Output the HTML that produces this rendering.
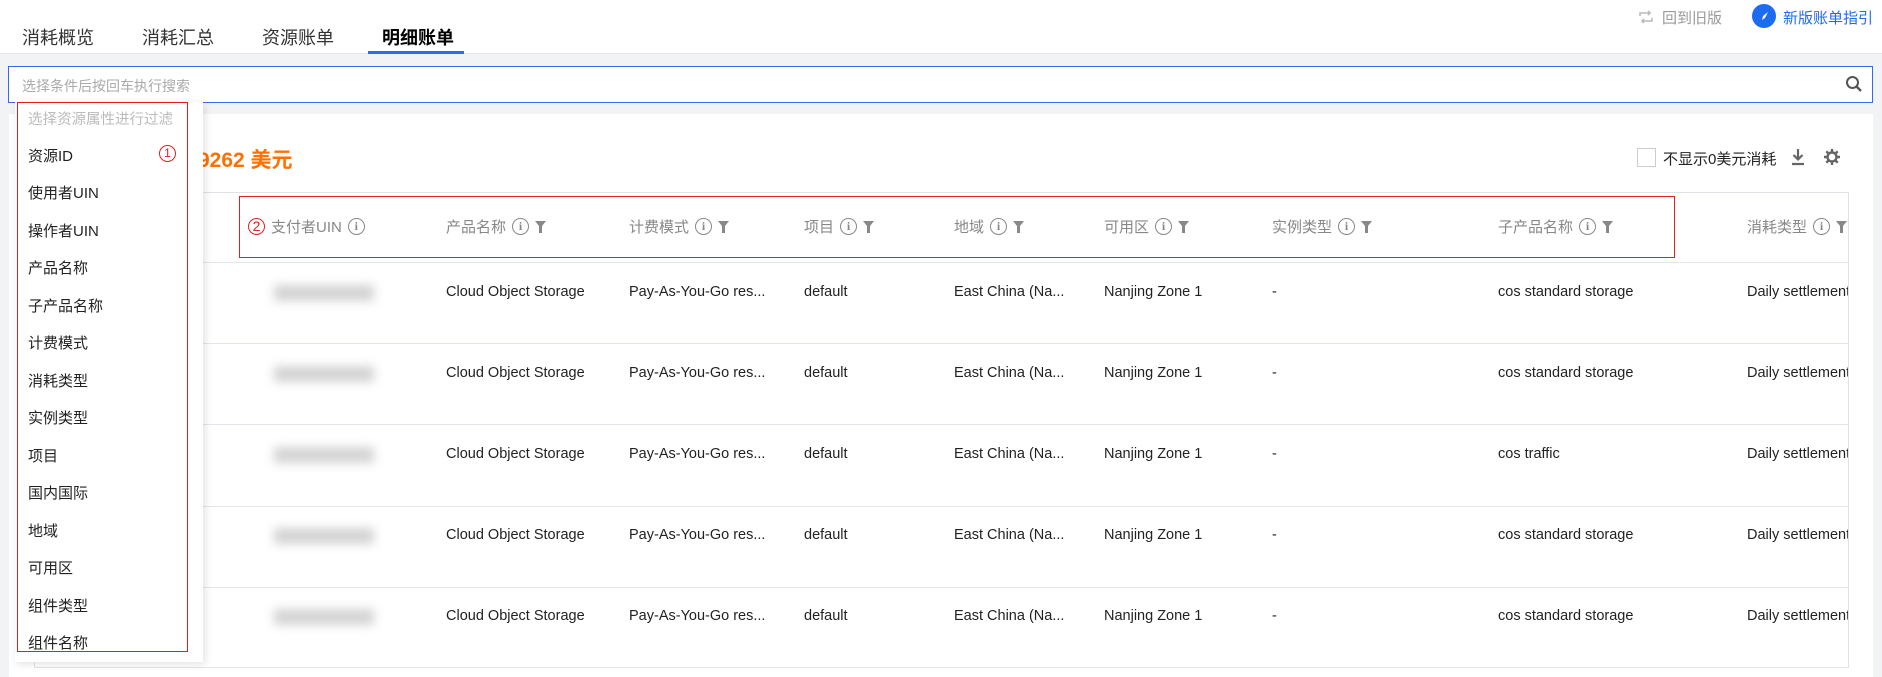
<!DOCTYPE html>
<html><head><meta charset="utf-8"><style>
*{margin:0;padding:0;box-sizing:border-box}
body{width:1882px;height:677px;overflow:hidden;background:#f2f3f5;font-family:"Liberation Sans","Noto Sans CJK SC",sans-serif;position:relative;color:#333}
.a{position:absolute;white-space:nowrap}
.tab{font-size:18px;color:#333;top:24px}
.hd{font-size:15px;color:#888;top:216px;display:flex;align-items:center;gap:6px}
.i{display:inline-block;width:17px;height:17px;border:1.8px solid #888;border-radius:50%;font-size:12px;line-height:14px;text-align:center;font-weight:bold;color:#888;font-family:"Liberation Serif",serif}
.c{font-size:14.5px;color:#222}
.row{position:absolute;left:34px;width:1814px;height:1px;background:#e2e5ea}
.blur{position:absolute;left:274px;width:100px;height:16px;background:#c8c8c8;filter:blur(5px);opacity:.8}
.it{position:absolute;left:28px;font-size:15px;color:#222}
</style></head><body>
<div class="a" style="left:0;top:0;width:1882px;height:54px;background:#fff;border-bottom:1px solid #e6e8ec"></div>
<div class="a tab" style="left:22px">消耗概览</div>
<div class="a tab" style="left:142px">消耗汇总</div>
<div class="a tab" style="left:262px">资源账单</div>
<div class="a tab" style="left:382px;font-weight:bold;color:#000">明细账单</div>
<div class="a" style="left:368px;top:51px;width:96px;height:3px;background:#2f6bf0"></div>
<svg class="a" style="left:1638px;top:9px" width="16" height="16" viewBox="0 0 16 16"><path d="M2 7V4h10M10 2l2 2-2 2M14 9v3H4M6 14l-2-2 2-2" fill="none" stroke="#bbb" stroke-width="1.6"/></svg>
<div class="a" style="left:1662px;top:7px;font-size:15px;color:#999">回到旧版</div>
<div class="a" style="left:1752px;top:4px;width:24px;height:24px;border-radius:50%;background:#1c6cf2"></div>
<svg class="a" style="left:1756px;top:8px" width="16" height="16" viewBox="0 0 16 16"><path d="M12 4L9 10 6 12 7 8z" fill="#fff"/></svg>
<div class="a" style="left:1783px;top:7px;font-size:15px;color:#1c6cf2">新版账单指引</div>
<div class="a" style="left:8px;top:66px;width:1865px;height:37px;background:#fff;border:1.5px solid #2f6bf0"></div>
<div class="a" style="left:22px;top:76px;font-size:14px;color:#aaa">选择条件后按回车执行搜索</div>
<svg class="a" style="left:1845px;top:75px" width="18" height="18" viewBox="0 0 18 18"><circle cx="7.5" cy="7.5" r="5.5" fill="none" stroke="#555" stroke-width="2"/><path d="M11.5 11.5L16 16" stroke="#555" stroke-width="2.4"/></svg>
<div class="a" style="left:9px;top:114px;width:1864px;height:563px;background:#fff"></div>
<div class="a" style="left:198px;top:144px;font-size:21px;font-weight:bold;color:#ff7000">9262 美元</div>
<div class="a" style="left:1637px;top:148px;width:19px;height:19px;border:1px solid #ccc;background:#fff"></div>
<div class="a" style="left:1663px;top:148px;font-size:15px;color:#222">不显示0美元消耗</div>
<svg class="a" style="left:1790px;top:148px" width="16" height="18" viewBox="0 0 16 18"><path d="M8 1v10M3.5 7L8 11.5 12.5 7M2 16h12" fill="none" stroke="#666" stroke-width="2.2"/></svg>
<svg class="a" style="left:1823px;top:148px" width="18" height="18" viewBox="0 0 18 18"><circle cx="9" cy="9" r="4.5" fill="none" stroke="#666" stroke-width="2.4"/><path d="M9 1v3M9 14v3M1 9h3M14 9h3M3.3 3.3l2.2 2.2M12.5 12.5l2.2 2.2M3.3 14.7l2.2-2.2M12.5 5.5l2.2-2.2" stroke="#666" stroke-width="2.4"/></svg>
<div class="a" style="left:34px;top:192px;width:1815px;height:476px;border:1px solid #dfe3e8;border-bottom:none"></div>
<div class="row" style="top:262px"></div>
<div class="row" style="top:343px"></div>
<div class="row" style="top:424px"></div>
<div class="row" style="top:506px"></div>
<div class="row" style="top:587px"></div>
<div class="row" style="top:667px"></div>
<div class="a" style="left:0;top:0;width:1848px;height:677px;overflow:hidden">
<div class="a hd" style="left:248px"><span style="color:#e02020;font-size:14px;border:1.4px solid #e02020;border-radius:50%;width:17px;height:17px;display:inline-block;text-align:center;line-height:15px">2</span><span>支付者UIN</span><span class="i">i</span></div>
<div class="a hd" style="left:446px">产品名称<span class="i">i</span><svg width="11" height="12" viewBox="0 0 11 12"><path d="M0 0h11L7 5v7H4V5z" fill="#888"/></svg></div>
<div class="a hd" style="left:629px">计费模式<span class="i">i</span><svg width="11" height="12" viewBox="0 0 11 12"><path d="M0 0h11L7 5v7H4V5z" fill="#888"/></svg></div>
<div class="a hd" style="left:804px">项目<span class="i">i</span><svg width="11" height="12" viewBox="0 0 11 12"><path d="M0 0h11L7 5v7H4V5z" fill="#888"/></svg></div>
<div class="a hd" style="left:954px">地域<span class="i">i</span><svg width="11" height="12" viewBox="0 0 11 12"><path d="M0 0h11L7 5v7H4V5z" fill="#888"/></svg></div>
<div class="a hd" style="left:1104px">可用区<span class="i">i</span><svg width="11" height="12" viewBox="0 0 11 12"><path d="M0 0h11L7 5v7H4V5z" fill="#888"/></svg></div>
<div class="a hd" style="left:1272px">实例类型<span class="i">i</span><svg width="11" height="12" viewBox="0 0 11 12"><path d="M0 0h11L7 5v7H4V5z" fill="#888"/></svg></div>
<div class="a hd" style="left:1498px">子产品名称<span class="i">i</span><svg width="11" height="12" viewBox="0 0 11 12"><path d="M0 0h11L7 5v7H4V5z" fill="#888"/></svg></div>
<div class="a hd" style="left:1747px">消耗类型<span class="i">i</span><svg width="11" height="12" viewBox="0 0 11 12"><path d="M0 0h11L7 5v7H4V5z" fill="#888"/></svg></div>
<div class="blur" style="top:285px"></div>
<div class="blur" style="top:366px"></div>
<div class="blur" style="top:447px"></div>
<div class="blur" style="top:528px"></div>
<div class="blur" style="top:609px"></div>
<div class="a c" style="left:446px;top:284px">Cloud Object Storage</div><div class="a c" style="left:629px;top:284px">Pay-As-You-Go res...</div><div class="a c" style="left:804px;top:284px">default</div><div class="a c" style="left:954px;top:284px">East China (Na...</div><div class="a c" style="left:1104px;top:284px">Nanjing Zone 1</div><div class="a c" style="left:1272px;top:284px">-</div><div class="a c" style="left:1498px;top:284px">cos standard storage</div><div class="a c" style="left:1747px;top:284px">Daily settlement</div>
<div class="a c" style="left:446px;top:365px">Cloud Object Storage</div><div class="a c" style="left:629px;top:365px">Pay-As-You-Go res...</div><div class="a c" style="left:804px;top:365px">default</div><div class="a c" style="left:954px;top:365px">East China (Na...</div><div class="a c" style="left:1104px;top:365px">Nanjing Zone 1</div><div class="a c" style="left:1272px;top:365px">-</div><div class="a c" style="left:1498px;top:365px">cos standard storage</div><div class="a c" style="left:1747px;top:365px">Daily settlement</div>
<div class="a c" style="left:446px;top:446px">Cloud Object Storage</div><div class="a c" style="left:629px;top:446px">Pay-As-You-Go res...</div><div class="a c" style="left:804px;top:446px">default</div><div class="a c" style="left:954px;top:446px">East China (Na...</div><div class="a c" style="left:1104px;top:446px">Nanjing Zone 1</div><div class="a c" style="left:1272px;top:446px">-</div><div class="a c" style="left:1498px;top:446px">cos traffic</div><div class="a c" style="left:1747px;top:446px">Daily settlement</div>
<div class="a c" style="left:446px;top:527px">Cloud Object Storage</div><div class="a c" style="left:629px;top:527px">Pay-As-You-Go res...</div><div class="a c" style="left:804px;top:527px">default</div><div class="a c" style="left:954px;top:527px">East China (Na...</div><div class="a c" style="left:1104px;top:527px">Nanjing Zone 1</div><div class="a c" style="left:1272px;top:527px">-</div><div class="a c" style="left:1498px;top:527px">cos standard storage</div><div class="a c" style="left:1747px;top:527px">Daily settlement</div>
<div class="a c" style="left:446px;top:608px">Cloud Object Storage</div><div class="a c" style="left:629px;top:608px">Pay-As-You-Go res...</div><div class="a c" style="left:804px;top:608px">default</div><div class="a c" style="left:954px;top:608px">East China (Na...</div><div class="a c" style="left:1104px;top:608px">Nanjing Zone 1</div><div class="a c" style="left:1272px;top:608px">-</div><div class="a c" style="left:1498px;top:608px">cos standard storage</div><div class="a c" style="left:1747px;top:608px">Daily settlement</div>
</div>
<div class="a" style="left:239px;top:196px;width:1436px;height:62px;border:1.5px solid #e02020"></div>
<div class="a" style="left:15px;top:102px;width:188px;height:560px;background:#fff;box-shadow:2px 2px 8px rgba(0,0,0,.12)"></div>
<div class="a" style="left:17px;top:102px;width:171px;height:550px;border:1.5px solid #e02020"></div>
<div class="it" style="top:108px;color:#bbb;font-size:14.5px">选择资源属性进行过滤</div>
<div class="a" style="left:159px;top:145px;width:17px;height:17px;border:1.4px solid #e02020;border-radius:50%;color:#e02020;font-size:12px;text-align:center;line-height:15px">1</div>
<div class="it" style="top:145px">资源ID</div>
<div class="it" style="top:182px">使用者UIN</div>
<div class="it" style="top:220px">操作者UIN</div>
<div class="it" style="top:257px">产品名称</div>
<div class="it" style="top:295px">子产品名称</div>
<div class="it" style="top:332px">计费模式</div>
<div class="it" style="top:370px">消耗类型</div>
<div class="it" style="top:407px">实例类型</div>
<div class="it" style="top:445px">项目</div>
<div class="it" style="top:482px">国内国际</div>
<div class="it" style="top:520px">地域</div>
<div class="it" style="top:557px">可用区</div>
<div class="it" style="top:595px">组件类型</div>
<div class="it" style="top:632px">组件名称</div>
</body></html>
